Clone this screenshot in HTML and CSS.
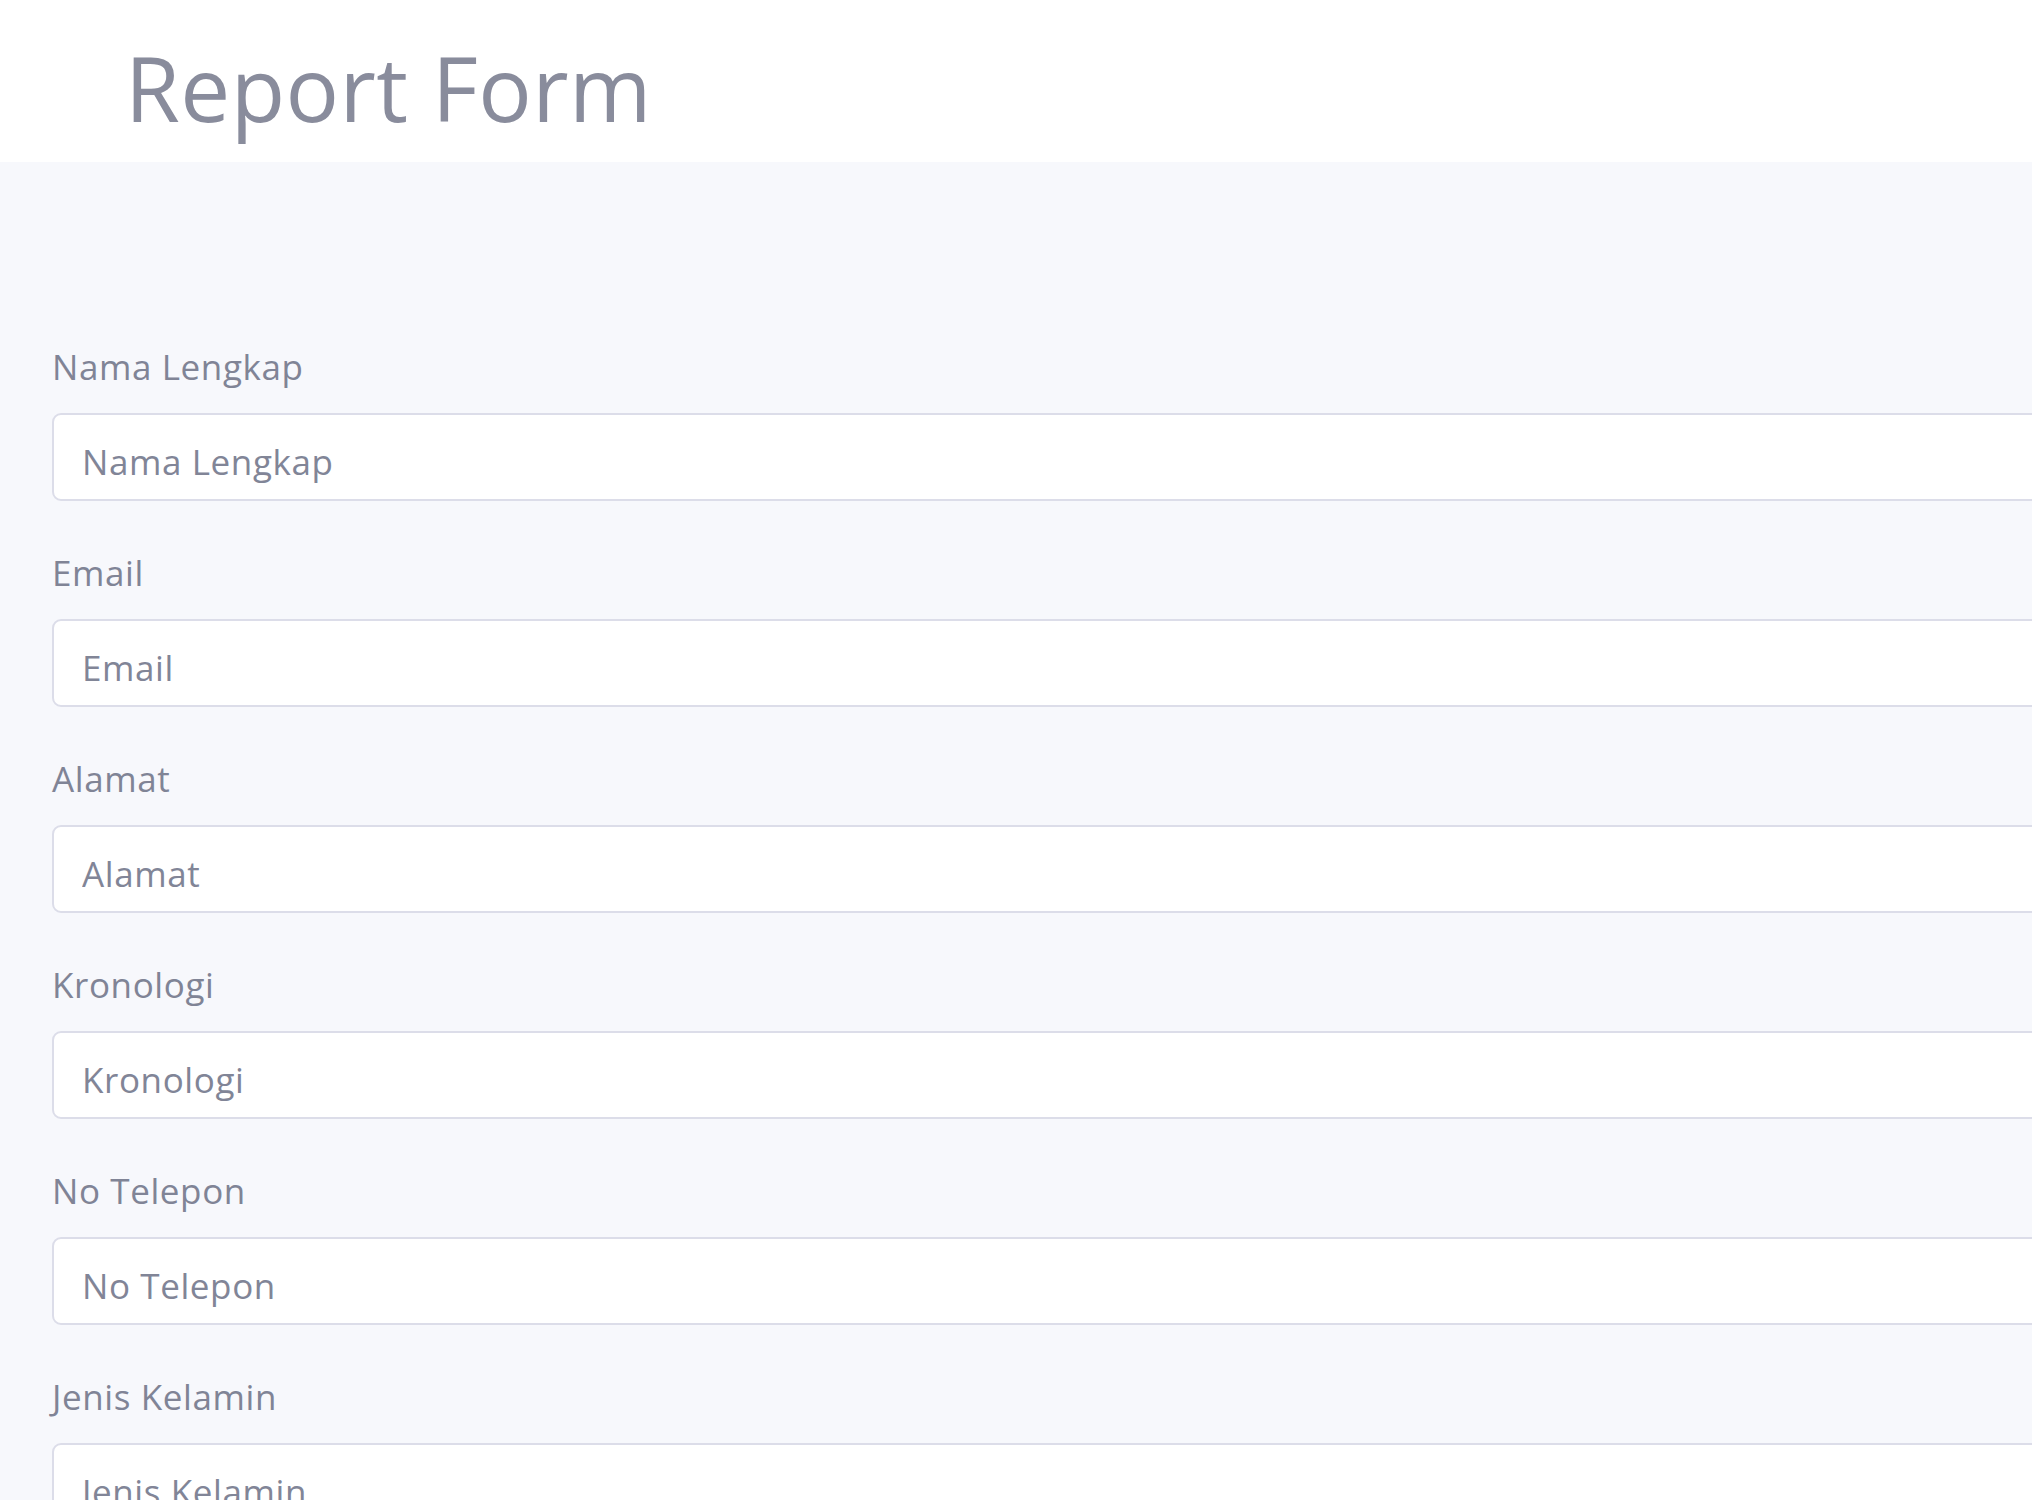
FILE: index.html
```html
<!DOCTYPE html>
<html lang="id">
<head>
<meta charset="utf-8">
<title>Report Form</title>
<link rel="stylesheet" href="styles.css">
</head>
<body>
<header class="page-header">
  <h1 class="page-title">Report Form</h1>
</header>
<main class="page-main">
  <form class="report-form">
    <div class="field">
      <label class="field-label" for="nama">Nama Lengkap</label>
      <input class="field-input" id="nama" type="text" placeholder="Nama Lengkap">
    </div>
    <div class="field">
      <label class="field-label" for="email">Email</label>
      <input class="field-input" id="email" type="text" placeholder="Email">
    </div>
    <div class="field">
      <label class="field-label" for="alamat">Alamat</label>
      <input class="field-input" id="alamat" type="text" placeholder="Alamat">
    </div>
    <div class="field">
      <label class="field-label" for="kronologi">Kronologi</label>
      <input class="field-input" id="kronologi" type="text" placeholder="Kronologi">
    </div>
    <div class="field">
      <label class="field-label" for="telepon">No Telepon</label>
      <input class="field-input" id="telepon" type="text" placeholder="No Telepon">
    </div>
    <div class="field">
      <label class="field-label" for="jk">Jenis Kelamin</label>
      <input class="field-input" id="jk" type="text" placeholder="Jenis Kelamin">
    </div>
  </form>
</main>
</body>
</html>
```

FILE: styles.css
```css
html, body {
  margin: 0;
  padding: 0;
  overflow: hidden;
}
body {
  font-family: "Open Sans", "Noto Sans", sans-serif;
  background: #f7f8fc;
  color: #808496;
}
.page-header {
  background: #ffffff;
  height: 162px;
  box-sizing: border-box;
  padding: 35px 0 0 125px;
}
.page-title {
  margin: 0;
  font-size: 89px;
  font-weight: 400;
  line-height: 1.2;
  letter-spacing: 0.4px;
  color: #898c9c;
}
.page-main {
  padding: 179px 0 0 52px;
}
.report-form {
  display: flex;
  flex-direction: column;
  gap: 46px;
}
.field {
  display: flex;
  flex-direction: column;
  gap: 21px;
}
.field-label {
  font-size: 35px;
  line-height: 51px;
  letter-spacing: 0.6px;
  color: #808496;
}
.field-input {
  box-sizing: border-box;
  width: 2100px;
  height: 88px;
  margin: 0;
  padding: 8px 28px 0 28px;
  border: 2px solid #dcdde9;
  border-radius: 9px;
  background: #ffffff;
  font-family: "Open Sans", "Noto Sans", sans-serif;
  font-size: 35px;
  letter-spacing: 0.6px;
  color: #808496;
  outline: none;
}
.field-input::placeholder {
  color: #818597;
  opacity: 1;
}
```
